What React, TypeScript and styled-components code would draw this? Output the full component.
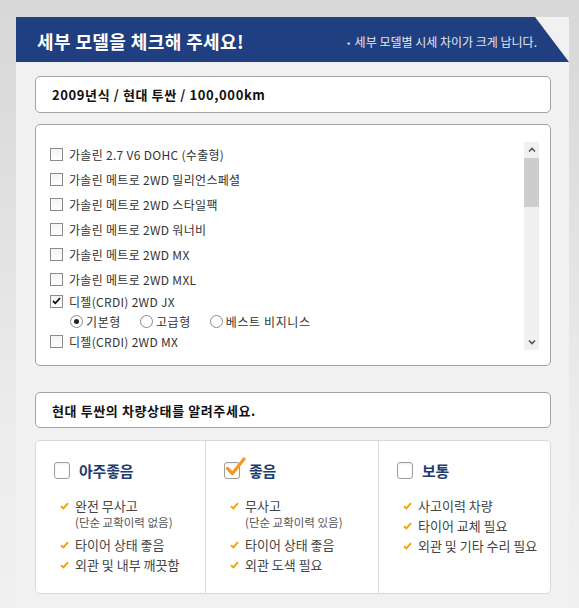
import React from 'react';
import styled, { createGlobalStyle } from 'styled-components';

const GlobalStyle = createGlobalStyle`
  html, body {
    margin: 0;
    padding: 0;
  }
  body {
    width: 579px;
    height: 608px;
    overflow: hidden;
    background: linear-gradient(180deg, #d8d8d8 0px, #dcdcdc 120px, #ececec 420px, #f0f0f0 608px);
    font-family: "Liberation Sans", "Noto Sans CJK KR", sans-serif;
  }
`;

const Panel = styled.div`
  margin: 17px 0 0 16px;
  width: 553px;
  height: 591px;
  background: #f1f1f1;
`;

const Header = styled.div`
  height: 45px;
  background: #1f3f80;
  clip-path: polygon(0 0, calc(100% - 34px) 0, 100% 100%, 0 100%);
  display: flex;
  align-items: center;
  justify-content: space-between;
  padding: 0 32px 0 21px;
  color: #fff;
`;

const Title = styled.h1`
  margin: 0;
  font-family: "Noto Sans CJK KR", sans-serif;
  font-size: 18px;
  font-weight: 700;
  letter-spacing: 0.4px;
  padding-top: 2px;
`;

const Notice = styled.div`
  font-family: "Noto Sans CJK KR", sans-serif;
  font-size: 12px;
  color: #e4e8f1;
  padding-top: 4px;
`;

const Star = styled.span`
  font-size: 9px;
  margin-right: 4px;
  position: relative;
  top: 2px;
`;

const Content = styled.div`
  padding: 14px 18px 0 19px;
`;

const InfoBox = styled.div<{ $gap: number; $h: number }>`
  box-sizing: border-box;
  height: ${(p) => p.$h}px;
  margin-bottom: ${(p) => p.$gap}px;
  border: 1px solid #a3a3a3;
  border-radius: 5px;
  background: #fff;
  display: flex;
  align-items: center;
  padding-left: 16px;
  font-family: "Noto Sans CJK KR", sans-serif;
  font-size: 13px;
  font-weight: 700;
  letter-spacing: 0.6px;
  color: #111;
`;

const ListBox = styled.div`
  box-sizing: border-box;
  height: 242px;
  margin-bottom: 26px;
  border: 1px solid #a3a3a3;
  border-radius: 5px;
  background: #fff;
  display: flex;
  overflow: hidden;
`;

const Options = styled.div`
  flex: 1;
  padding: 19px 0 0 14px;
  overflow: hidden;
`;

const OptionRow = styled.div<{ $expanded?: boolean }>`
  height: 20px;
  margin-top: ${(p) => (p.$expanded ? -3 : 0)}px;
  margin-bottom: ${(p) => (p.$expanded ? 0 : 5)}px;
  display: flex;
  align-items: center;
  gap: 6px;
  font-family: "Noto Sans CJK KR", sans-serif;
  font-size: 12px;
  letter-spacing: 0.3px;
  color: #333;
`;

const Box = styled.span`
  width: 13px;
  height: 13px;
  box-sizing: border-box;
  border: 1px solid #8a8a8a;
  background: linear-gradient(180deg, #f4f4f4, #fff);
  display: inline-flex;
  align-items: center;
  justify-content: center;
  flex-shrink: 0;
`;

const RadioRow = styled.div`
  height: 20px;
  display: flex;
  align-items: center;
  padding-left: 20px;
  gap: 19px;
  font-family: "Noto Sans CJK KR", sans-serif;
  font-size: 12px;
  letter-spacing: 0.6px;
  color: #333;
`;

const RadioLabel = styled.label`
  display: flex;
  align-items: center;
  gap: 3px;
`;

const Radio = styled.span<{ $on?: boolean }>`
  width: 13px;
  height: 13px;
  box-sizing: border-box;
  border-radius: 50%;
  border: 1px solid #8a8a8a;
  background: #fff;
  display: inline-flex;
  align-items: center;
  justify-content: center;
  &::after {
    content: '';
    width: 5px;
    height: 5px;
    border-radius: 50%;
    background: ${(p) => (p.$on ? '#222' : 'transparent')};
  }
`;

const Scrollbar = styled.div`
  width: 15px;
  margin: 17px 11px 15px 0;
  background: #f0f0f0;
  display: flex;
  flex-direction: column;
`;

const Arrow = styled.div`
  height: 16px;
  display: flex;
  align-items: center;
  justify-content: center;
`;

const Track = styled.div`
  flex: 1;
`;

const Thumb = styled.div`
  height: 49px;
  background: #cdcdcd;
`;

const Cards = styled.div`
  box-sizing: border-box;
  height: 154px;
  border: 1px solid #d8d8d8;
  border-radius: 5px;
  background: #fff;
  display: grid;
  grid-template-columns: 170px 173px 1fr;
`;

const Card = styled.div<{ $last?: boolean }>`
  padding: 21px 0 0 18px;
  border-right: ${(p) => (p.$last ? 'none' : '1px solid #dcdcdc')};
  font-family: "Noto Sans CJK KR", sans-serif;
`;

const CardHead = styled.div`
  display: flex;
  align-items: center;
  gap: 9px;
  height: 17px;
  margin-bottom: 17px;
`;

const CardCheck = styled.span`
  position: relative;
  width: 16px;
  height: 17px;
  box-sizing: border-box;
  border: 1px solid #9d9d9d;
  border-radius: 3px;
  background: #fff;
  box-shadow: inset 0 1px 2px rgba(0, 0, 0, 0.08);
  flex-shrink: 0;
`;

const BigTick = styled.svg`
  position: absolute;
  left: 0px;
  top: -6px;
`;

const CardTitle = styled.span`
  font-size: 15px;
  font-weight: 700;
  color: #1c3c70;
  letter-spacing: -0.2px;
`;

const Bullets = styled.ul`
  list-style: none;
  margin: 0;
  padding: 0 0 0 6px;
`;

const Bullet = styled.li`
  display: flex;
  gap: 6px;
  font-size: 13px;
  line-height: 20px;
  color: #444;
  &:has(small) {
    padding-bottom: 7px;
  }
`;

const Sub = styled.small`
  display: block;
  font-size: 11.5px;
  line-height: 12px;
  color: #555;
`;

const TickWrap = styled.span`
  width: 9px;
  height: 20px;
  display: inline-flex;
  align-items: center;
  flex-shrink: 0;
`;

const SmallTick = () => (
  <TickWrap>
    <svg width="9" height="8" viewBox="0 0 9 8">
      <path d="M1 4.2 L3.4 6.4 L8 1.2" fill="none" stroke="#f5a300" strokeWidth="2" />
    </svg>
  </TickWrap>
);

const Chevron = ({ down }: { down?: boolean }) => (
  <svg width="8" height="6" viewBox="0 0 8 6">
    <path d={down ? 'M1 1.5 L4 4.5 L7 1.5' : 'M1 4.5 L4 1.5 L7 4.5'} fill="none" stroke="#555" strokeWidth="1.6" />
  </svg>
);

const models = [
  '가솔린 2.7 V6 DOHC (수출형)',
  '가솔린 메트로 2WD 밀리언스페셜',
  '가솔린 메트로 2WD 스타일팩',
  '가솔린 메트로 2WD 워너비',
  '가솔린 메트로 2WD MX',
  '가솔린 메트로 2WD MXL',
  '디젤(CRDI) 2WD JX',
  '디젤(CRDI) 2WD MX',
];

const grades = ['기본형', '고급형', '베스트 비지니스'];

type Item = { text: string; sub?: string };

const conditions: { title: string; checked?: boolean; items: Item[] }[] = [
  {
    title: '아주좋음',
    items: [
      { text: '완전 무사고', sub: '(단순 교확이력 없음)' },
      { text: '타이어 상태 좋음' },
      { text: '외관 및 내부 깨끗함' },
    ],
  },
  {
    title: '좋음',
    checked: true,
    items: [
      { text: '무사고', sub: '(단순 교확이력 있음)' },
      { text: '타이어 상태 좋음' },
      { text: '외관 도색 필요' },
    ],
  },
  {
    title: '보통',
    items: [
      { text: '사고이력 차량' },
      { text: '타이어 교체 필요' },
      { text: '외관 및 기타 수리 필요' },
    ],
  },
];

const App: React.FC = () => {
  const selected = 6;

  return (
    <>
      <GlobalStyle />
      <Panel>
        <Header>
          <Title>세부 모델을 체크해 주세요!</Title>
          <Notice>
            <Star>*</Star>세부 모델별 시세 차이가 크게 납니다.
          </Notice>
        </Header>
        <Content>
          <InfoBox $gap={11} $h={37}>2009년식 / 현대 투싼 / 100,000km</InfoBox>
          <ListBox>
            <Options>
              {models.map((m, i) => (
                <React.Fragment key={m}>
                  <OptionRow $expanded={i === selected}>
                    <Box>
                      {i === selected && (
                        <svg width="9" height="8" viewBox="0 0 9 8">
                          <path d="M1 4 L3.3 6.3 L8 1" fill="none" stroke="#111" strokeWidth="1.8" />
                        </svg>
                      )}
                    </Box>
                    {m}
                  </OptionRow>
                  {i === selected && (
                    <RadioRow>
                      {grades.map((g, j) => (
                        <RadioLabel key={g}>
                          <Radio $on={j === 0} />
                          {g}
                        </RadioLabel>
                      ))}
                    </RadioRow>
                  )}
                </React.Fragment>
              ))}
            </Options>
            <Scrollbar>
              <Arrow>
                <Chevron />
              </Arrow>
              <Thumb />
              <Track />
              <Arrow>
                <Chevron down />
              </Arrow>
            </Scrollbar>
          </ListBox>
          <InfoBox $gap={12} $h={36}>현대 투싼의 차량상태를 알려주세요.</InfoBox>
          <Cards>
            {conditions.map((c, i) => (
              <Card key={c.title} $last={i === conditions.length - 1}>
                <CardHead>
                  <CardCheck>
                    {c.checked && (
                      <BigTick width="22" height="20" viewBox="0 0 22 20">
                        <path d="M2.5 11.5 L7.5 16.5 L19 2" fill="none" stroke="#f39a1e" strokeWidth="3.2" strokeLinecap="round" strokeLinejoin="round" />
                      </BigTick>
                    )}
                  </CardCheck>
                  <CardTitle>{c.title}</CardTitle>
                </CardHead>
                <Bullets>
                  {c.items.map((it) => (
                    <Bullet key={it.text}>
                      <SmallTick />
                      <div>
                        {it.text}
                        {it.sub && <Sub>{it.sub}</Sub>}
                      </div>
                    </Bullet>
                  ))}
                </Bullets>
              </Card>
            ))}
          </Cards>
        </Content>
      </Panel>
    </>
  );
};

export default App;
